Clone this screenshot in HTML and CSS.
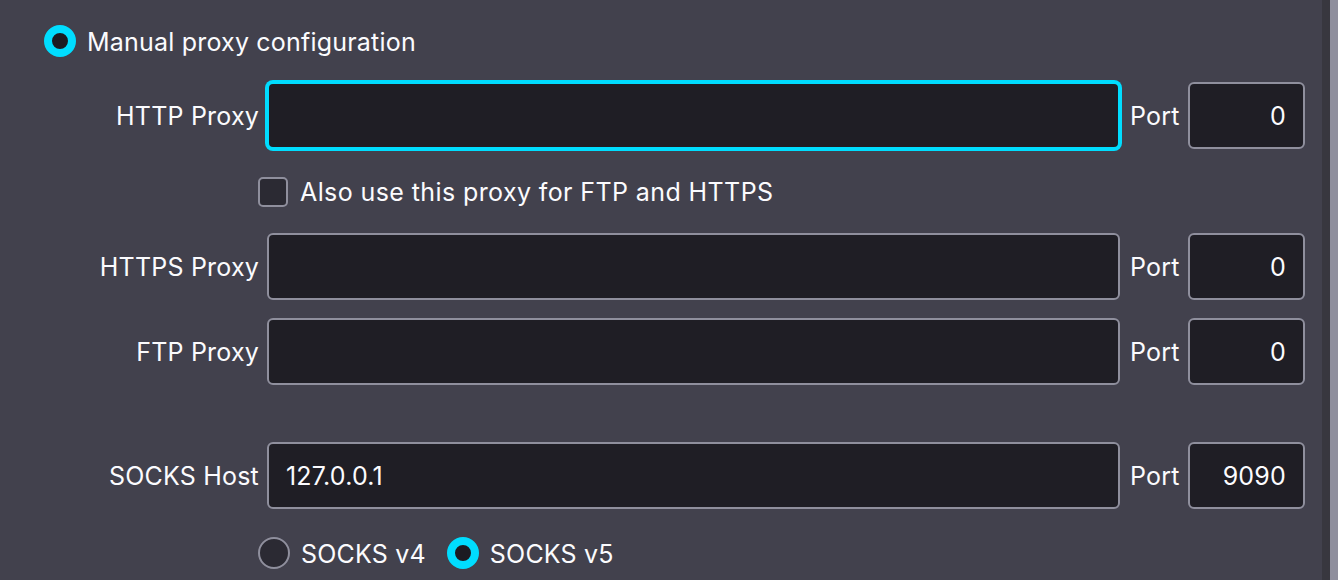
FILE: index.html
```html
<!DOCTYPE html>
<html>
<head>
<meta charset="utf-8">
<link rel="stylesheet" href="styles.css">
</head>
<body>
<div class="window">
  <div class="content">
    <label class="choice top-choice">
      <span class="radio checked"></span>
      <span class="choice-text">Manual proxy configuration</span>
    </label>

    <div class="row row-http">
      <span class="label">HTTP Proxy</span>
      <div class="input focused"></div>
      <span class="port-label">Port</span>
      <div class="input port">0</div>
    </div>

    <label class="choice sub-choice row-check">
      <span class="checkbox"></span>
      <span class="choice-text wide">Also use this proxy for FTP and HTTPS</span>
    </label>

    <div class="row row-https">
      <span class="label">HTTPS Proxy</span>
      <div class="input"></div>
      <span class="port-label">Port</span>
      <div class="input port">0</div>
    </div>

    <div class="row row-ftp">
      <span class="label">FTP Proxy</span>
      <div class="input"></div>
      <span class="port-label">Port</span>
      <div class="input port">0</div>
    </div>

    <div class="row row-socks">
      <span class="label">SOCKS Host</span>
      <div class="input host">127.0.0.1</div>
      <span class="port-label">Port</span>
      <div class="input port">9090</div>
    </div>

    <div class="sub-choice row-versions">
      <label class="choice">
        <span class="radio"></span>
        <span class="choice-text">SOCKS v4</span>
      </label>
      <label class="choice v5">
        <span class="radio checked"></span>
        <span class="choice-text">SOCKS v5</span>
      </label>
    </div>
  </div>
  <div class="track"></div>
  <div class="edge"></div>
</div>
</body>
</html>
```

FILE: styles.css
```css
html, body {
  margin: 0;
  padding: 0;
  background: #42414d;
}

body {
  font-family: Inter, "Noto Sans", "Liberation Sans", sans-serif;
  font-size: 25px;
  letter-spacing: 0.2px;
  color: #fbfbfe;
  overflow: hidden;
}

.window {
  display: flex;
  width: 1338px;
  height: 580px;
}

.content {
  flex: 1;
  display: flex;
  flex-direction: column;
  padding: 25px 17px 0 0;
}

.track {
  width: 8px;
  background: #38373f;
}

.edge {
  width: 8px;
  background: #8f8f9d;
}

.choice {
  display: flex;
  align-items: center;
  height: 32px;
}

.top-choice {
  padding-left: 44px;
}

.choice-text {
  white-space: nowrap;
  padding-top: 1px;
}

.choice-text.wide {
  letter-spacing: 0.4px;
}

.radio {
  box-sizing: border-box;
  width: 32px;
  height: 32px;
  border-radius: 50%;
  border: 2px solid #8f8f9d;
  background: #2b2a33;
  margin-right: 11px;
  flex: none;
}

.radio.checked {
  border: 8px solid #00ddff;
  background: #1c1b22;
}

.checkbox {
  box-sizing: border-box;
  width: 30px;
  height: 30px;
  border-radius: 5px;
  border: 2px solid #8f8f9d;
  background: #2b2a33;
  margin-right: 12px;
  flex: none;
}

.sub-choice {
  padding-left: 258px;
}

.row {
  display: grid;
  grid-template-columns: 259px 1fr 50px 117px;
  column-gap: 8px;
  align-items: center;
}

.label {
  text-align: right;
  white-space: nowrap;
}

.input {
  box-sizing: border-box;
  height: 67px;
  border: 2px solid #8f8f9d;
  border-radius: 6px;
  background: #1f1e25;
  display: flex;
  align-items: center;
  padding: 0 17px;
  margin-right: 2px;
}

.input.focused {
  border-color: #00ddff;
  box-shadow: 0 0 0 2px #00ddff;
}

.input.port {
  justify-content: flex-end;
  margin-right: 0;
}

.row-http { margin-top: 25px; }
.row-check { margin-top: 27px; height: 31px; }
.row-https { margin-top: 26px; }
.row-ftp { margin-top: 18px; }
.row-socks { margin-top: 57px; }

.row-versions {
  display: flex;
  margin-top: 28px;
}

.v5 {
  margin-left: 21px;
}
```
